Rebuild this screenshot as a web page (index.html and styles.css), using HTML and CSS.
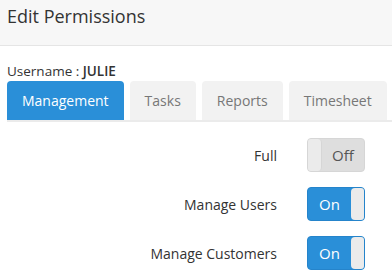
FILE: index.html
```html
<!DOCTYPE html>
<html lang="en">

<head>
    <meta charset="UTF-8">
    <meta name="viewport" content="width=device-width, initial-scale=1.0">
    <title>Edit Permissions</title>
    <link rel="stylesheet" href="styles.css">
</head>

<body>

    <div class="header">
        <h1>Edit Permissions</h1>
    </div>

    <div class="content">
        <div class="username">Username : <b>JULIE</b></div>

        <!-- Abas -->
        <ul class="tabs">
            <li class="tab active">Management</li>
            <li class="tab">Tasks</li>
            <li class="tab">Reports</li>
            <li class="tab">Timesheet</li>
        </ul>

        <div class="permissions">
            <div class="row">
                <span class="label">Full</span>
                <div class="toggle off">
                    <span class="handle"></span>
                    <span class="state">Off</span>
                </div>
            </div>
            <div class="row">
                <span class="label">Manage Users</span>
                <div class="toggle on">
                    <span class="state">On</span>
                    <span class="handle"></span>
                </div>
            </div>
            <div class="row">
                <span class="label">Manage Customers</span>
                <div class="toggle on">
                    <span class="state">On</span>
                    <span class="handle"></span>
                </div>
            </div>
        </div>
    </div>

</body>

</html>
```

FILE: styles.css
```css
body {
    font-family: "Open Sans", sans-serif;
    margin: 0;
    background: #ffffff;
    color: #333;
}

.header {
    background: #f7f7f7;
    border-bottom: 1px solid #e5e5e5;
    height: 45px;
    padding: 0 7px;
}

h1 {
    margin: 0;
    font-size: 18px;
    font-weight: normal;
    line-height: 33px;
}

.content {
    padding: 15px 7px 0;
}

.username {
    font-size: 13.5px;
    line-height: 20px;
}

.username b {
    font-weight: 600;
}

.tabs {
    list-style: none;
    margin: 0;
    padding: 0;
    display: flex;
    gap: 6px;
    border-bottom: 2px solid #ebebeb;
    margin-right: -7px;
}

.tab {
    font-size: 14px;
    line-height: 39px;
    padding: 0 15px;
    background: #f2f2f2;
    color: #777;
    border-radius: 4px 4px 0 0;
}

.tab.active {
    background: #2a8fd8;
    color: #fff;
}

.permissions {
    padding-top: 16px;
    display: flex;
    flex-direction: column;
    gap: 15px;
}

.row {
    display: flex;
    align-items: center;
    justify-content: flex-end;
    gap: 30px;
    padding-right: 20px;
}

.label {
    font-size: 14px;
}

.toggle {
    width: 58px;
    height: 34px;
    box-sizing: border-box;
    border-radius: 4px;
    display: flex;
    overflow: hidden;
}

.toggle .state {
    flex: 1;
    text-align: center;
    font-size: 15px;
    line-height: 32px;
}

.toggle .handle {
    width: 13px;
    background: #ebebeb;
}

.toggle.on {
    background: #2a8fd8;
    border: 1px solid #2584cb;
    color: #fff;
}

.toggle.on .handle {
    border-radius: 4px 0 0 4px;
}

.toggle.off {
    background: #dedede;
    border: 1px solid #d6d6d6;
    color: #555;
}

.toggle.off .handle {
    border-right: 1px solid #d6d6d6;
    border-radius: 0 4px 4px 0;
}
```
